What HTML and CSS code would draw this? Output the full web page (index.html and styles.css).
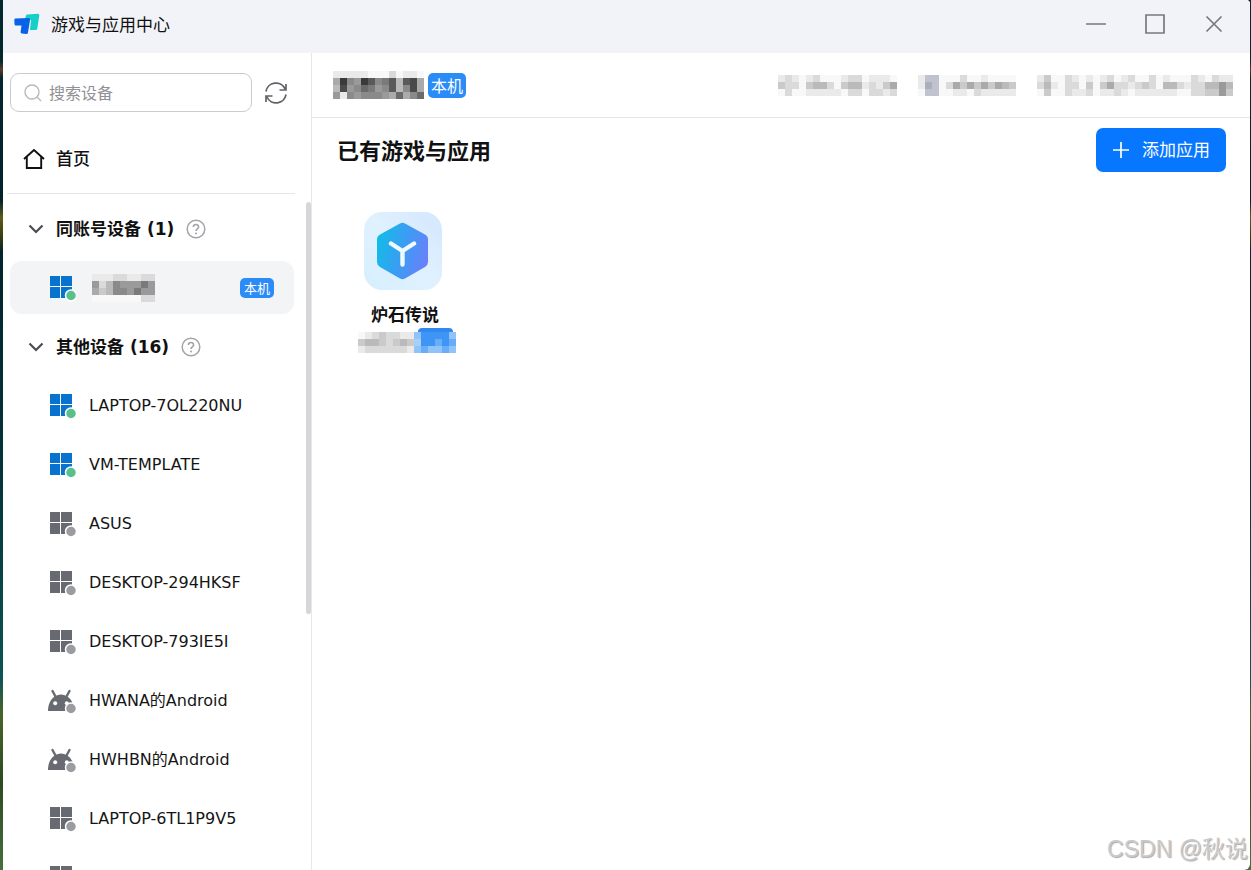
FILE: index.html
```
<!DOCTYPE html>
<html lang="zh-CN">
<head>
<meta charset="utf-8">
<title>游戏与应用中心</title>
<link rel="stylesheet" href="styles.css">
</head>
<body>
<svg class="defs" aria-hidden="true">
  <symbol id="win" viewBox="0 0 28 28">
    <path d="M2 2h10v10H2zM13 2h11v10H13zM2 13h10v11H2zM13 13h11v11H13z" fill="currentColor"/>
    <circle class="status-dot" cx="23" cy="21.500" r="5.500" stroke-width="1.500"/>
  </symbol>
  <symbol id="droid" viewBox="0 0 28 28">
    <path d="M4.500 4l3 5.500M21.500 4l-3 5.500" stroke="currentColor" stroke-width="2.400" stroke-linecap="round"/>
    <path d="M0 24C0 18 2 13 6 10C10 6.500 16 6.500 20 10C24 13 26 18 26 24z" fill="currentColor"/>
    <circle cx="7.200" cy="16.300" r="2" fill="#fff"/><circle cx="18.800" cy="16.300" r="2" fill="#fff"/>
    <circle class="status-dot" cx="23" cy="21.500" r="5.500" stroke-width="1.500"/>
  </symbol>
  <symbol id="help" viewBox="0 0 20 20">
    <circle cx="10" cy="10" r="8.800" fill="none" stroke="#a3a3a8" stroke-width="1.500"/>
    <path d="M7.400 8C7.400 4.700 12.600 4.700 12.600 7.900C12.600 9.800 10 9.900 10 12" fill="none" stroke="#a3a3a8" stroke-width="1.600"/>
    <circle cx="10" cy="14.400" r="1" fill="#a3a3a8"/>
  </symbol>
  <symbol id="chevron" viewBox="0 0 16 10">
    <path d="M1.500 1.500L8 8l6.500-6.500" fill="none" stroke="#4b4d52" stroke-width="2.200"/>
  </symbol>
</svg>
<div class="window">
  <header class="titlebar">
    <svg class="logo" viewBox="0 0 26 22">
      <path d="M12 2.500Q12.200 1.500 13.500 1.400L24 .700Q25.500 .700 25.300 2.200L23.300 15.500Q23 17 21.500 17H16L17 7L11 6z" fill="#16cfc6"/>
      <path d="M1.500 5.600L14.500 5Q16.200 5 16.100 6.500L14 19.500Q13.700 21.200 12.300 21.100L7.800 20.600Q6.500 20.400 6.600 19L7.500 12.500H1.800Q.500 12.500 .500 11L.300 7Q.300 5.600 1.500 5.600z" fill="#0862e8"/>
    </svg>
    <h1 class="app-title">游戏与应用中心</h1>
    <div class="window-controls">
      <button class="window-button" aria-label="最小化"><svg viewBox="0 0 20 20"><path d="M0 10h20"/></svg></button>
      <button class="window-button" aria-label="最大化"><svg viewBox="0 0 20 20"><path d="M1 1h18v18H1z"/></svg></button>
      <button class="window-button" aria-label="关闭"><svg viewBox="0 0 20 20"><path d="M2.500 2.500l15 15M17.500 2.500l-15 15"/></svg></button>
    </div>
  </header>
  <div class="body">
    <aside class="sidebar">
      <div class="search-row">
        <label class="search">
          <svg class="search-icon" viewBox="0 0 18 18"><circle cx="8" cy="8" r="7"/><path d="M13 13l4 4"/></svg>
          <input class="search-input" type="text" placeholder="搜索设备" aria-label="搜索设备">
        </label>
        <button class="refresh" aria-label="刷新">
          <svg viewBox="0 0 24 24"><path d="M2 10.500A10 10 0 0 1 21 8M22 13.500A10 10 0 0 1 3 16M22 3v6h-6.500M2 21v-6h6.500"/></svg>
        </button>
      </div>
      <a class="home" href="#home">
        <svg class="home-icon" viewBox="0 0 22 20"><path d="M1 10L11 1l10 9M3.800 8v11h14.400V8"/></svg>
        首页
      </a>
      <div class="devices">
        <button class="group"><svg class="chevron"><use href="#chevron"/></svg>同账号设备 (1)<svg class="help"><use href="#help"/></svg></button>
        <a class="device online selected" href="#local"><svg class="device-icon"><use href="#win"/></svg><svg class="mosaic" data-rows="eeeddeedd/9db899979/acb889799/fffffffdd"></svg><span class="badge small">本机</span></a>
        <button class="group"><svg class="chevron"><use href="#chevron"/></svg>其他设备 (16)<svg class="help"><use href="#help"/></svg></button>
        <a class="device online" href="#d1"><svg class="device-icon"><use href="#win"/></svg>LAPTOP-7OL220NU</a>
        <a class="device online" href="#d2"><svg class="device-icon"><use href="#win"/></svg>VM-TEMPLATE</a>
        <a class="device" href="#d3"><svg class="device-icon"><use href="#win"/></svg>ASUS</a>
        <a class="device" href="#d4"><svg class="device-icon"><use href="#win"/></svg>DESKTOP-294HKSF</a>
        <a class="device" href="#d5"><svg class="device-icon"><use href="#win"/></svg>DESKTOP-793IE5I</a>
        <a class="device" href="#d6"><svg class="device-icon"><use href="#droid"/></svg>HWANA的Android</a>
        <a class="device" href="#d7"><svg class="device-icon"><use href="#droid"/></svg>HWHBN的Android</a>
        <a class="device" href="#d8"><svg class="device-icon"><use href="#win"/></svg>LAPTOP-6TL1P9V5</a>
        <a class="device" href="#d9" aria-label="设备"><svg class="device-icon"><use href="#win"/></svg></a>
        <div class="scroll-thumb"></div>
      </div>
    </aside>
    <main class="main">
      <div class="device-bar">
        <svg class="mosaic" data-rows="eeeeefffdfeef/a38935875b54a/b49867985b84a/9e898889a6a86"></svg>
        <span class="badge">本机</span>
        <div class="meta">
          <svg class="mosaic" data-rows="edefedfffeddfeeef/cddfcbbdfcbbedeca/fdffeeeeefddfdded"></svg>
          <svg class="mosaic" data-rows="eqqfffdffeffff/epqfdacacacabc/fqqffeefdeeeee"></svg>
          <svg class="mosaic" data-rows="ecffdefefedfedffdfefffdefdee/dbefddfcfcaddedcdfbbdeddbb9b/fcffdeedfeedefeeeeeeffddcc9c"></svg>
        </div>
      </div>
      <div class="toolbar">
        <h2 class="heading">已有游戏与应用</h2>
        <button class="add"><svg class="plus" viewBox="0 0 18 18"><path d="M9 1v16M1 9h16"/></svg>添加应用</button>
      </div>
      <div class="apps">
        <a class="app" href="#app">
          <svg class="app-icon" viewBox="0 0 78 78">
            <defs>
              <linearGradient id="tile" x1="0" y1="1" x2="1" y2="0"><stop offset="0" stop-color="#d5effd"/><stop offset=".5" stop-color="#e0f1fe"/><stop offset="1" stop-color="#d3e7fd"/></linearGradient>
              <linearGradient id="hex" x1="0" y1=".3" x2="1" y2=".6"><stop offset="0" stop-color="#12bce8"/><stop offset=".5" stop-color="#3a9df3"/><stop offset="1" stop-color="#6a80fa"/></linearGradient>
            </defs>
            <rect width="78" height="78" rx="18" fill="url(#tile)"/>
            <path d="M36 11.500Q38.500 10 41 11.500L61 22.500Q64 24.200 64 27.500V50Q64 53 61 55L41 66.500Q38.500 68 36 66.500L16 55Q13 53 13 50V27.500Q13 24.200 16 22.500z" fill="url(#hex)"/>
            <path d="M27 31.500L38.500 39V52.500M38.500 39L50 31.500" fill="none" stroke="#effaff" stroke-width="4.400" stroke-linecap="round" stroke-linejoin="round"/>
          </svg>
          <span class="app-name">炉石传说</span>
          <svg class="mosaic capped" data-rows="fedcddeetsssst/cbbcdcbcussvsv/eddddddetvttvt"></svg>
        </a>
      </div>
    </main>
  </div>
</div>
<div class="watermark">CSDN @秋说</div>
<script src="mosaic.js"></script>
</body>
</html>
```
FILE: styles.css
```
* { box-sizing: border-box; }
body {
  margin: 0;
  height: 100vh;
  overflow: hidden;
  padding: 0 1px 0 3px;
  color: #111;
  font: 16px/24px "DejaVu Sans", "Noto Sans CJK SC", sans-serif;
  background: linear-gradient(#04262d 0, #04262d 7%, #5b3a2a 8%, #04262d 9%, #032229 23%, #5d5a1c 25%, #3d4010 27%, #03242c 29%, #04343c 55%, #0d5454 78%, #4a6429 82%, #2e4a22 90%, #46703c 100%);
}
button { font: inherit; color: inherit; border: 0; background: none; padding: 0; }
a { color: inherit; text-decoration: none; }
svg { display: block; flex: none; }
.defs { position: absolute; width: 0; height: 0; }

.window {
  height: 100%;
  display: flex;
  flex-direction: column;
  overflow: hidden;
  background: #fff;
  border-radius: 0 4px 6px 0;
}
.titlebar {
  flex: none;
  display: flex;
  align-items: center;
  height: 53px;
  padding: 0 26px 5px 11px;
  background: #f1f3f8;
}
.logo { width: 26px; height: 22px; }
.app-title { margin: 0 auto 0 11px; font-size: 17px; font-weight: 400; font-family: "Noto Sans CJK SC", sans-serif; }
.window-controls { display: flex; gap: 39px; }
.window-button { width: 20px; height: 20px; }
.window-button svg { width: 20px; height: 20px; fill: none; stroke: #77797d; stroke-width: 1.7; }

.body { flex: 1; min-height: 0; display: flex; }
.sidebar {
  flex: none;
  width: 309px;
  display: flex;
  flex-direction: column;
  padding-top: 20px;
  border-right: 1px solid #e8e8ea;
}
.search-row { display: flex; align-items: center; gap: 12px; padding-left: 7px; }
.search {
  display: flex;
  align-items: center;
  gap: 7px;
  width: 242px;
  height: 39px;
  padding: 0 13px;
  border: 1px solid #cbcbce;
  border-radius: 9px;
}
.search-icon { width: 18px; height: 18px; fill: none; stroke: #b9b9be; stroke-width: 1.4; }
.search-input { flex: 1; min-width: 0; padding: 0 0 2px; border: 0; outline: 0; background: none; font: 16px/24px "Noto Sans CJK SC", sans-serif; }
.search-input::placeholder { color: #909096; opacity: 1; }
.refresh svg { width: 24px; height: 24px; fill: none; stroke: #606266; stroke-width: 1.7; }
.home {
  display: flex;
  align-items: center;
  gap: 11px;
  height: 70px;
  margin: 12px 16px 0 4px;
  padding-left: 16px;
  border-bottom: 1px solid #e6e6e8;
  font-size: 17px;
  font-weight: 500;
}
.home-icon { width: 22px; height: 20px; fill: none; stroke: #111; stroke-width: 1.9; }

.devices {
  position: relative;
  flex: 1;
  min-height: 0;
  overflow: hidden;
  display: flex;
  flex-direction: column;
  gap: 6px;
  padding: 8px 17px 0 7px;
}
.group, .device { flex: none; display: flex; align-items: center; height: 53px; }
.group { font-size: 17px; font-weight: 700; padding-left: 18px; text-align: left; }
.chevron { width: 16px; height: 10px; margin-right: 12px; }
.help { width: 20px; height: 20px; margin-left: 12px; }
.device {
  --status: #9b9ca1;
  gap: 13px;
  padding: 0 20px 0 38px;
  color: #151515;
}
.device.online { --status: #58c08a; }
.device-icon { width: 28px; height: 28px; color: #686a72; }
.online .device-icon { color: #0873cf; }
.status-dot { fill: var(--status); stroke: #fff; }
.device .mosaic { margin-left: 3px; }
.selected { background: #f2f4f6; border-radius: 12px; }
.scroll-thumb {
  position: absolute;
  top: 8px;
  right: 0;
  width: 5px;
  height: 61%;
  border-radius: 3px;
  background: #d7d7da;
}

.badge {
  padding: 0 3px;
  border-radius: 5px;
  background: #2b8cf8;
  color: #fff;
  font: 16px/25px "Noto Sans CJK SC", sans-serif;
}
.badge.small { margin-left: auto; padding: 0 4px; font-size: 13px; line-height: 20px; }

.main { flex: 1; min-width: 0; }
.device-bar {
  display: flex;
  align-items: center;
  gap: 4px;
  height: 65px;
  padding: 0 17px 0 21px;
  border-bottom: 1px solid #e6e6e8;
}
.meta { display: flex; gap: 21px; margin-left: auto; }
.toolbar { display: flex; align-items: center; justify-content: space-between; padding: 10px 24px 0 25px; }
.heading { margin: 0; padding-top: 4px; font-size: 22px; line-height: 32px; }
.add {
  display: flex;
  align-items: center;
  justify-content: center;
  gap: 12px;
  width: 130px;
  height: 44px;
  border-radius: 7px;
  background: #0877ff;
  color: #fff;
  font-size: 17px;
}
.plus { width: 18px; height: 18px; fill: none; stroke: #fff; stroke-width: 1.7; }
.apps { display: flex; padding: 40px 46px; }
.app { display: flex; flex-direction: column; }
.app-icon { width: 78px; height: 78px; margin-left: 6px; }
.app-name { margin: 13px 0 1px 13px; font-size: 17px; font-weight: 700; }

.watermark {
  position: absolute;
  right: 3px;
  bottom: 6px;
  color: #c9c9cb;
  font: 23px/30px "Liberation Sans", "Noto Sans CJK SC", sans-serif;
  text-shadow: -1px -1px 0 #fff, 1px 1px 1px #aaa;
}
```
FILE: mosaic.js
```
// Fills each .mosaic with 7px cells; hex digits are grey levels, other letters are tints.
const CELL = 7;
const TINTS = { p: '#abaec2', q: '#c0c2ce', s: '#3f95f6', t: '#8fc3f9', u: '#aacff5', v: '#69acf8' };
const NS = 'http://www.w3.org/2000/svg';

function addRect(svg, x, y, w, h, fill, rx) {
  const r = document.createElementNS(NS, 'rect');
  const attrs = { x, y, width: w, height: h, fill, rx: rx || 0 };
  for (const k in attrs) r.setAttribute(k, attrs[k]);
  svg.appendChild(r);
}

document.querySelectorAll('.mosaic').forEach(svg => {
  const rows = svg.dataset.rows.split('/');
  const top = svg.classList.contains('capped') ? 4 : 0;
  svg.setAttribute('width', rows[0].length * CELL);
  svg.setAttribute('height', rows.length * CELL + top);
  if (top) addRect(svg, 60, 0, 35, 12, '#3088f0', 4);
  rows.forEach((row, y) => [...row].forEach((c, x) => {
    const fill = TINTS[c] || (c === 'f' ? '#f8f8f8' : '#' + (c + 'a').repeat(3));
    addRect(svg, x * CELL, y * CELL + top, CELL, CELL, fill);
  }));
});
```
